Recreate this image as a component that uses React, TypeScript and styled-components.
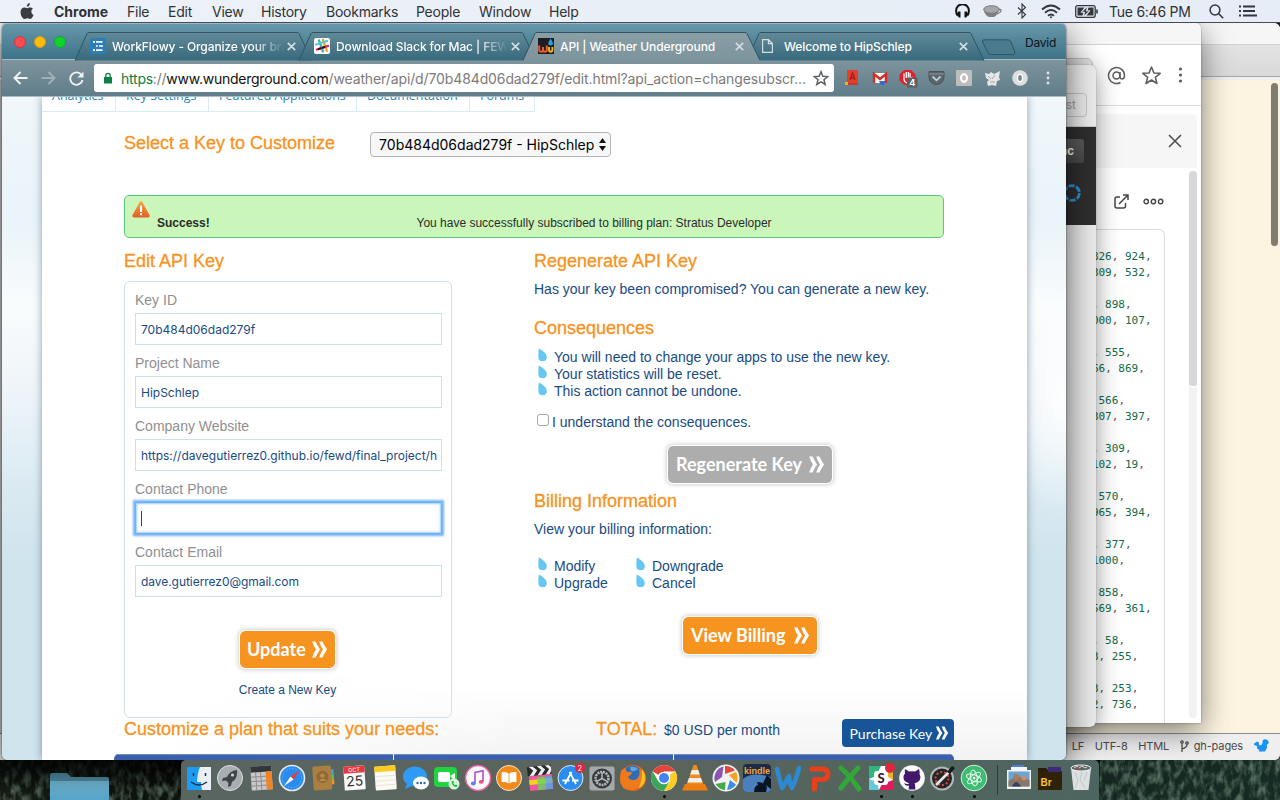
import React from 'react';
import styled, { createGlobalStyle, css } from 'styled-components';

const ui = `Inter, "Liberation Sans", sans-serif`;
const helv = `"Liberation Sans", Arial, sans-serif`;

const Global = createGlobalStyle`
  * { box-sizing: border-box; }
  body { margin: 0; overflow: hidden; background: #111a14; }
  svg { display: block; flex: none; }
`;

const Desktop = styled.main`
  position: relative;
  width: 1280px;
  height: 800px;
  overflow: hidden;
  font-family: ${ui};
  background: #111a14;
`;

/* ---------- menu bar ---------- */

const MenuBar = styled.header`
  position: relative;
  z-index: 5;
  display: flex;
  justify-content: space-between;
  align-items: center;
  height: 23px;
  padding: 0 15px 0 20px;
  background: linear-gradient(90deg, #edf2f8, #e6edf6);
  border-bottom: 1px solid #434c57;
  font-size: 14px;
  color: #2f3236;
  letter-spacing: -0.25px;
`;

const MenuList = styled.nav`
  display: grid;
  grid-template-columns: 34px 73px 41px 44px 49px 65px 90px 63px 70px auto;
  align-items: center;
  white-space: nowrap;
`;

const AppName = styled.span`
  font-weight: 700;
  letter-spacing: 0;
`;

const StatusList = styled.div`
  display: grid;
  grid-template-columns: 30px 30px 30px 28px 44px 92px 30px 34px;
  align-items: center;
  justify-items: center;
  white-space: nowrap;
`;

const Clock = styled.span`
  justify-self: start;
`;

/* ---------- windows ---------- */

const Window = styled.section`
  position: absolute;
  overflow: hidden;
  display: flex;
  flex-direction: column;
`;

const EditorWindow = styled(Window)`
  left: -60px;
  top: 23px;
  width: 1340px;
  height: 737px;
  border-radius: 6px;
  background: #fcf4e0;
`;

const TitleStrip = styled.div`
  flex: none;
  height: 22px;
  background: #f6f6f6;
  border-bottom: 1px solid #d2d2d2;
`;

const EditorTabs = styled.div`
  height: 35px;
  background: linear-gradient(#e3e3e3, #d9d9d9 31px, #a8a8a8 31px, #a8a8a8 32px, #eeeeee 32px);
`;

const EditorBody = styled.div`
  flex: 1;
  display: flex;
  justify-content: flex-end;
  padding: 3px 2px 0 0;
  background: linear-gradient(90deg, #d2d2d4 64px, #fcf4e0 64px);
`;

const EditorThumb = styled.div`
  width: 7px;
  height: 163px;
  border-radius: 4px;
  background: #807c70;
`;

const EditorStatus = styled.footer`
  display: flex;
  align-items: center;
  justify-content: flex-end;
  gap: 10.5px;
  height: 27px;
  padding: 0 11.5px 2px 0;
  border-top: 1px solid #8c8c8c;
  background: #efefef;
  color: #4c4c4c;
  font-size: 11px;
  letter-spacing: -0.12px;
  white-space: nowrap;
`;

const Branch = styled.span`
  display: flex;
  align-items: center;
  gap: 5px;
`;

const ChatWindow = styled(Window)`
  left: 700px;
  top: 23px;
  width: 501px;
  height: 700px;
  border-radius: 6px 6px 0 0;
  background: #fff;
  box-shadow: 0 8px 30px rgba(0, 0, 0, 0.5), 0 0 2px rgba(0, 0, 0, 0.4);
`;

const ChatHeader = styled.div`
  flex: none;
  display: flex;
  justify-content: flex-end;
  align-items: center;
  height: 61px;
  padding-right: 9.5px;
  border-bottom: 1px solid #dcdcdc;
`;

const IconCell = styled.span<{ $w: number }>`
  display: flex;
  justify-content: center;
  align-items: center;
  width: ${(p) => p.$w}px;
`;

const ChatSubHeader = styled.div`
  flex: none;
  display: flex;
  align-items: center;
  justify-content: flex-end;
  height: 54px;
  margin: 8px 4px 0 0;
  padding-right: 15px;
  border-radius: 0 5px 0 0;
  background: #f6f6f6;
`;

const ChatColumns = styled.div`
  flex: 1;
  display: flex;
  justify-content: flex-end;
  min-height: 0;
  padding-right: 4px;
`;

const FileColumn = styled.div`
  width: 260px;
  margin-right: 24px;
  display: flex;
  flex-direction: column;
`;

const FileActions = styled.div`
  display: flex;
  justify-content: flex-end;
  align-items: center;
  gap: 14px;
  height: 61px;
  padding: 5px 1px 0 0;
`;

const CodeBox = styled.pre`
  flex: 1;
  margin: 0;
  padding: 19px 12.5px 0 0;
  border: 1px solid #dcdcdc;
  border-bottom: 0;
  border-radius: 0 6px 0 0;
  text-align: right;
  font: 11px/16px "DejaVu Sans Mono", monospace;
  color: #116b47;
`;

const Comma = styled.span`
  color: #555;
`;

const ChatScroll = styled.div`
  width: 8px;
  margin: 3px 0 5px;
  border-radius: 4px;
  background: #f2f2f2;
`;

const ChatThumb = styled.div`
  height: 217px;
  border-radius: 4px;
  background: #d8d8dc;
  border-bottom: 2px solid #fff;
`;

const HiddenWindow = styled(Window)`
  left: 700px;
  top: 58px;
  width: 393px;
  height: 40px;
  border-radius: 6px;
  background: #ededed;
  border: 1px solid #c9c9c9;
`;

const PageWindow = styled(Window)`
  left: 700px;
  top: 65px;
  width: 396px;
  height: 662px;
  border-radius: 6px;
  background: #ececec;
  box-shadow: 0 4px 24px rgba(0, 0, 0, 0.4), 0 0 1px rgba(0, 0, 0, 0.6);
`;

const PageWindowBar = styled.div`
  flex: none;
  display: flex;
  justify-content: flex-end;
  height: 62px;
  padding: 28px 9px 0 0;
  background: #eee;
  border-bottom: 1px solid #ccc;
`;

const GhostButton = styled.span`
  width: 80px;
  height: 24px;
  padding-right: 10px;
  border: 1px solid #c6c6c6;
  border-radius: 4px;
  text-align: right;
  font-size: 12px;
  line-height: 22px;
  color: #a2a2a2;
`;

const DarkPanel = styled.div`
  flex: none;
  display: flex;
  flex-direction: column;
  align-items: flex-end;
  gap: 21px;
  height: 98px;
  padding: 12px 12px 0 0;
  background: #2f2f2f;
`;

const DarkButton = styled.span`
  width: 80px;
  height: 24px;
  padding-right: 10px;
  border-radius: 3px;
  background: linear-gradient(#5c5c5c, #484848);
  text-align: right;
  font: 700 12px/24px ${helv};
  color: #fff;
`;

const RingWrap = styled.span`
  padding-right: 3px;
`;

/* ---------- browser ---------- */

const Browser = styled(Window)`
  left: 2px;
  top: 23px;
  width: 1064px;
  height: 737px;
  border-radius: 6px;
  background: #fff;
  box-shadow: 0 10px 34px rgba(0, 0, 0, 0.65), 0 0 2px rgba(0, 0, 0, 0.7);
`;

const TabStrip = styled.div`
  flex: none;
  display: flex;
  height: 37px;
  padding-top: 8px;
  border-top: 1px solid #9ab9c5;
  border-bottom: 1px solid #a3bcc5;
  background: linear-gradient(#6897aa, #3d7389);
`;

const Lights = styled.div`
  display: flex;
  gap: 8px;
  width: 73px;
  padding: 4px 0 0 12px;
`;

const Light = styled.i<{ $c: string; $b: string }>`
  width: 12px;
  height: 12px;
  border-radius: 50%;
  background: ${(p) => p.$c};
  border: 1px solid ${(p) => p.$b};
`;

const TabBox = styled.div<{ $active?: boolean }>`
  position: relative;
  z-index: ${(p) => (p.$active ? 2 : 1)};
  width: 238px;
  margin-right: -14px;
  height: ${(p) => (p.$active ? 29 : 28)}px;
`;

const TabShape = styled.svg`
  position: absolute;
  left: 0;
  top: 0;
`;

const TabInner = styled.div`
  position: relative;
  display: flex;
  align-items: center;
  height: 28px;
  padding: 0 14px 0 15px;
`;

const TabTitle = styled.span<{ $fade?: boolean }>`
  width: 175px;
  margin-left: 6px;
  overflow: hidden;
  white-space: nowrap;
  font-size: 12px;
  font-weight: 500;
  letter-spacing: -0.1px;
  color: #fff;
  ${(p) =>
    p.$fade &&
    css`
      mask-image: linear-gradient(90deg, #000 140px, transparent 172px);
    `}
`;

const NewTab = styled.svg`
  margin: 7px 0 0 10px;
`;

const Profile = styled.span`
  margin-left: 8px;
  padding-top: 3px;
  font-size: 12px;
  letter-spacing: -0.2px;
  line-height: 16px;
  color: #0c1216;
`;

const Toolbar = styled.div`
  flex: none;
  display: flex;
  align-items: center;
  height: 37px;
  padding: 0 4px;
  background: linear-gradient(#7d949d, #607d89);
  border-bottom: 1px solid #a9bcc3;
`;

const Omnibox = styled.div`
  display: flex;
  align-items: center;
  width: 740px;
  height: 28px;
  margin: 0 4px 0 4px;
  padding: 0 5px 0 9px;
  border-radius: 3px;
  background: #fff;
  font-size: 14px;
  color: #7b7b7b;
  white-space: nowrap;
`;

const Origin = styled.span`
  margin-left: 8px;
  letter-spacing: -0.24px;
`;

const Scheme = styled.span`
  color: #0d8043;
`;

const Host = styled.span`
  color: #111;
`;

const Path = styled.span`
  flex: 1;
  letter-spacing: -0.115px;
`;

/* ---------- web page ---------- */

const Viewport = styled.div`
  flex: 1;
  display: flex;
  min-height: 0;
  padding-left: 40px;
  overflow: hidden;
  background:
    radial-gradient(ellipse 60px 120px at 1060px 300px, rgba(255, 255, 255, 0.9), transparent),
    linear-gradient(#f1f7fb 0, #e9f3f9 120px, #f9fcfd 210px, #f4f8fb 250px, #edf4f9 300px, #dcebf3 380px, #d0e4ed 460px, #cfe4ed 100%);
`;

const Sheet = styled.div`
  width: 985px;
  padding-left: 82px;
  background: linear-gradient(90deg, #fff 12%, rgba(255, 255, 255, 0) 50%), linear-gradient(#fff 590px, #f2f2f2 665px);
  box-shadow: 0 0 8px rgba(20, 50, 70, 0.45);
  font-family: ${helv};
  font-size: 14px;
  color: #184b84;
`;

const SiteNav = styled.nav`
  display: flex;
  width: 493px;
  height: 15px;
  margin-left: -82px;
  border-bottom: 1px solid #d7ecf4;
`;

const NavItem = styled.a<{ $w: number }>`
  width: ${(p) => p.$w}px;
  padding-left: 10px;
  border-right: 1px solid #d7ecf4;
  font: 12.5px/18px "Open Sans", sans-serif;
  color: #2a84b5;
  white-space: nowrap;

  span {
    display: block;
    margin-top: -10px;
  }
`;

const Heading = styled.h2`
  margin: 0;
  font-size: 18px;
  font-weight: 400;
  line-height: 20px;
  color: #f7931e;
  -webkit-text-stroke: 0.3px #f7931e;
  white-space: nowrap;
`;

const KeyRow = styled.div`
  display: flex;
  gap: 35px;
  height: 25px;
  margin-top: 20px;

  ${Heading} {
    line-height: 22px;
  }
`;

const KeySelect = styled.div`
  display: flex;
  align-items: center;
  justify-content: space-between;
  width: 241px;
  height: 25px;
  padding: 0 4px 0 8px;
  border: 1px solid #b4b4b4;
  border-radius: 4px;
  background: #f7f7f7;
  font: 14px ${ui};
  color: #000;
  white-space: nowrap;
`;

const Alert = styled.div`
  display: flex;
  width: 820px;
  height: 43px;
  margin-top: 38px;
  padding: 5px 7px;
  border: 1px solid #5cc681;
  border-radius: 5px;
  background: #caf6ba;
  font-size: 12px;
  line-height: 16px;
  color: #2b2b2b;
`;

const AlertTitle = styled.strong`
  width: 259.5px;
  padding: 14px 0 0 7px;
`;

const AlertText = styled.span`
  padding: 14px 0 0 7px;
`;

const Columns = styled.div`
  display: grid;
  grid-template-columns: 328px 431px;
  column-gap: 82px;
  height: 480px;
  padding-top: 13px;
`;

const EditForm = styled.form`
  display: flex;
  flex-direction: column;
  align-items: center;
  height: 437px;
  margin-top: 10px;
  padding: 8px 11px 0 10px;
  border: 1px solid #cfe3ed;
  border-radius: 6px;
`;

const Field = styled.label`
  display: block;
  width: 100%;
  height: 63px;
  line-height: 20px;
  color: #8f8f8f;
`;

const Input = styled.span<{ $focus?: boolean; $ls?: number }>`
  display: flex;
  align-items: center;
  height: 32px;
  width: 307px;
  margin-top: 3px;
  padding: 1px 4px 0 5px;
  overflow: hidden;
  border: 1px solid #cbe2eb;
  background: #fff;
  font: 12px ${ui};
  letter-spacing: ${(p) => p.$ls ?? 0}px;
  color: #184b84;
  white-space: nowrap;
  ${(p) =>
    p.$focus &&
    css`
      border-color: #6db1f7;
      box-shadow: 0 0 2px 2px #73b4f8, inset 0 0 2px 1px #9fccf9;
    `}
`;

const Caret = styled.i`
  width: 1px;
  height: 15px;
  background: #184b84;
`;

const PushButton = styled.button<{ $grey?: boolean; $w: number; $inset?: number }>`
  display: flex;
  align-items: center;
  justify-content: space-between;
  width: ${(p) => p.$w}px;
  height: 39px;
  padding: 0 7px 1px ${(p) => p.$inset ?? 8.5}px;
  border: 1px solid #fff;
  border-radius: 6px;
  background: ${(p) => (p.$grey ? '#adadad' : '#f79420')};
  background-clip: padding-box;
  box-shadow: 0 0 4px 1px rgba(0, 0, 0, 0.18);
  font: 700 18px/20px Lato, sans-serif;
  color: #fff;
  white-space: nowrap;
`;

const NewKeyLink = styled.a`
  margin-top: 13px;
  font-size: 12px;
  line-height: 16px;
`;

const Side = styled.div`
  display: flex;
  flex-direction: column;
`;

const Para = styled.p`
  margin: 9px 0 0;
  line-height: 18px;
`;

const DropList = styled.ul`
  margin: 10px 0 0;
  padding: 0;
  list-style: none;
`;

const BillingLists = styled.div`
  display: grid;
  grid-template-columns: 98px 120px;
  margin: 9px 0 25px;
`;

const DropItem = styled.li`
  display: flex;
  gap: 7px;
  height: 17px;
  padding-left: 4px;
  line-height: 18px;
`;

const Consent = styled.label`
  display: flex;
  gap: 3px;
  margin: 14px 0;
  padding-left: 3px;
  line-height: 18px;
`;

const Box = styled.i`
  width: 12px;
  height: 12px;
  margin-top: 1px;
  border: 1px solid #a5a5a5;
  border-radius: 3px;
  background: #fff;
`;

const Spaced = styled.div<{ $top: number }>`
  margin-top: ${(p) => p.$top}px;
`;

const Centered = styled.div`
  display: flex;
  justify-content: center;
`;

const PlanRow = styled.div`
  display: grid;
  grid-template-columns: 472px 68px 178px 112px;
  height: 28px;
  margin-top: 1px;
`;

const Price = styled.span`
  line-height: 22px;
`;

const Purchase = styled.button`
  display: flex;
  align-items: center;
  justify-content: space-between;
  height: 28px;
  padding: 0 5px 0 7.500px;
  border: 0;
  border-radius: 4px;
  background: #175598;
  font: 14px Lato, sans-serif;
  color: #fff;
  white-space: nowrap;
`;

const PlanTable = styled.div`
  display: grid;
  grid-template-columns: 279px 279px 1fr;
  column-gap: 1px;
  width: 840px;
  height: 8px;
  margin: 7px 0 0 -10px;
  border-radius: 5px 5px 0 0;
  overflow: hidden;
  background: #fff;
`;

const PlanCell = styled.div`
  background: #3a60ae;
  border-top: 1px solid #6f8cc6;
`;

/* ---------- desktop bottom ---------- */

const Forest = styled.svg`
  position: absolute;
  left: 0;
  top: 740px;
`;

const Dock = styled.footer`
  position: absolute;
  left: 181px;
  top: 760px;
  display: flex;
  width: 918px;
  height: 40px;
  padding: 3px 0 0 2.5px;
  border-radius: 5px 5px 0 0;
  background: linear-gradient(90deg, #596561, #5a645c 50%, #4d6560);
`;

const DockCell = styled.div`
  display: flex;
  flex-direction: column;
  align-items: center;
  width: 31px;
`;

const RunDot = styled.i`
  width: 3px;
  height: 3px;
  margin-top: 2px;
  border-radius: 50%;
  background: #000;
`;

const DockDivider = styled.div`
  width: 1px;
  height: 30px;
  margin: 2px 6px 0 7px;
  background: #2e3a38;
`;

/* ---------- drawings ---------- */

const DoubleChevron = ({ s = 17 }: { s?: number }) => (
  <svg width={s} height={s} viewBox="0 0 17 17" fill="#fff">
    <path d="M1.200 .5h3.300Q6 4 9 8.500 6 13 4.500 16.500H1.200Q2.500 12 5 8.500 2.500 5 1.200 .5z" />
    <path d="M8.200 .5h3.300Q13 4 16 8.500 13 13 11.500 16.500H8.200Q9.500 12 12 8.500 9.500 5 8.200 .5z" />
  </svg>
);

const Drop = () => (
  <svg width="9" height="14" viewBox="0 0 9 14">
    <path d="M.9 .3C4 2.800 8.800 5 8.800 9.200A4.200 4 0 0 1 .4 9.200C.4 6.500 .2 3.300 .9 .3z" fill="#67c6f2" />
  </svg>
);

const TabClose = () => (
  <svg width="9" height="9" viewBox="0 0 9 9" stroke="#d3dde1" strokeWidth="1.7">
    <path d="M.8 .8l7.400 7.400M8.200 .8L.8 8.200" />
  </svg>
);

const favicons: Record<string, React.ReactNode> = {
  workflowy: (
    <svg width="16" height="16" viewBox="0 0 16 16">
      <rect width="16" height="16" rx="1.500" fill="#2b7fb8" />
      <path d="M3 3.800h2M6 3.800h6.500M6 8h1.800M9 8h4M3 12.200h2M6 12.200h6.500" stroke="#fff" strokeWidth="1.700" />
    </svg>
  ),
  slack: (
    <svg width="16" height="16" viewBox="0 0 16 16">
      <rect width="16" height="16" rx="2" fill="#fff" />
      <g strokeWidth="2.300" strokeLinecap="round">
        <path d="M5 2.500l4 11" stroke="#3eb890" />
        <path d="M9 1.800l3.800 11" stroke="#e9a820" />
        <path d="M2 6.500l11-3.500" stroke="#5cc4dd" />
        <path d="M3 11.500l11-3.500" stroke="#e01765" />
        <path d="M4.800 11l1.500-.5M9 9.500l1-.3" stroke="#301020" />
      </g>
    </svg>
  ),
  wu: (
    <svg width="16" height="16" viewBox="0 0 16 16">
      <rect width="16" height="16" fill="#1e1e20" />
      <path d="M1.200 7.500v4q0 2.300 1.900 2.300T5 11.500V9v2.500q0 2.300 1.900 2.300t1.900-2.300v-4" fill="none" stroke="#ee5b2c" strokeWidth="2" />
      <path d="M11 9v2.500q0 2.300 1.700 2.300t1.700-2.300V9" fill="none" stroke="#f8b31b" strokeWidth="1.900" />
      <path d="M12.500 .5q2.400 3.300 2.400 4.800a2.300 2.300 0 0 1-4.600 0Q10.300 3.800 12.500 .5z" fill="#1fa4e3" />
    </svg>
  ),
  doc: (
    <svg width="16" height="16" viewBox="0 0 16 16" fill="none" stroke="#d5dfe3" strokeWidth="1.200">
      <path d="M.6 1.600h5.800l4 4v8.800H.6zM6.400 1.600v4h4" />
    </svg>
  ),
};

const Tab = ({ icon, title, active, fade }: { icon: string; title: string; active?: boolean; fade?: boolean }) => (
  <TabBox $active={active}>
    <TabShape width="238" height="29" viewBox="0 0 238 29">
      <defs>
        <linearGradient id={'g' + icon} x1="0" y1="0" x2="0" y2="1">
          <stop offset="0" stopColor={active ? '#8a9ea6' : '#628a98'} />
          <stop offset="1" stopColor={active ? '#7d949d' : '#37697d'} />
        </linearGradient>
      </defs>
      <path d="M0 28.500L12 1.500q.5-1 2-1h208q1.500 0 2 1l13 27" fill={`url(#g${icon})`} stroke="#2f5563" strokeWidth="1" />
      {active && <path d="M.6 28.500h236.800" stroke="#7d949d" />}
    </TabShape>
    <TabInner>
      {favicons[icon]}
      <TabTitle $fade={fade}>{title}</TabTitle>
      <TabClose />
    </TabInner>
  </TabBox>
);

const Badge = ({ cx = 24, cy = 5, children }: { cx?: number; cy?: number; children?: React.ReactNode }) => (
  <>
    <circle cx={cx} cy={cy} r="5" fill="#e0263c" />
    {children}
  </>
);

const dockIcons: { art: React.ReactNode; run?: boolean }[] = [
  { run: true, art: <><rect x="3" y="4" width="24" height="23" rx="1" fill="#1d9df2" /><path d="M16 4h11v23H18q-1-5-1-8h-4q.5-9 3-15z" fill="#eaf0f5" /><path d="M7 19q8 6 16 0" fill="none" stroke="#15314b" strokeWidth="1.400" /><path d="M9.500 10v3M21.500 10v3" stroke="#15314b" strokeWidth="1.500" /></> },
  { art: <><circle cx="15" cy="15" r="12.500" fill="#a7adb0" stroke="#dde1e2" /><path d="M22 7c-5 .5-8 3-10 7l-4 1-1 3 4-.5 2.500 2.500-.5 4 3-1.200 1-4c4-2 5.500-6 5-11.800z" fill="#3f4448" /><circle cx="17.500" cy="12" r="1.600" fill="#cfd3d5" /></> },
  { art: <g transform="rotate(-4 15 15)"><rect x="5" y="3" width="21" height="24" rx="1" fill="#c9c9c9" /><rect x="5" y="3" width="21" height="6" fill="#34373a" /><path d="M10 9v18M15 9v18M5 13.500h21M5 18h21M5 22.500h21" stroke="#8c8c8c" /><rect x="20" y="9" width="6" height="18" fill="#f08322" /></g> },
  { art: <><circle cx="15" cy="15" r="12.500" fill="#2a8bee" stroke="#e5e9ec" strokeWidth="1.600" /><circle cx="15" cy="15" r="9.500" fill="none" stroke="#8cc4fa" strokeDasharray="1 2" /><path d="M23 7l-6.500 9.500-3-3z" fill="#f03a34" /><path d="M7 23l6.500-9.500 3 3z" fill="#fff" /></> },
  { art: <g transform="rotate(-4 15 15)"><rect x="22" y="7" width="4" height="5" fill="#4a9fe0" /><rect x="22" y="12" width="4" height="5" fill="#5bc152" /><rect x="22" y="17" width="4" height="5" fill="#f2952a" /><rect x="5" y="3" width="18.500" height="24" rx="1.500" fill="#a97f42" /><circle cx="14.500" cy="14" r="6" fill="#8f6a33" /><circle cx="14.500" cy="12.500" r="2.200" fill="#b58b4e" /><path d="M10.500 18q4-5 8 0" fill="#b58b4e" /></g> },
  { art: <g transform="rotate(-4 15 15)"><rect x="5" y="3" width="21" height="24" rx="1" fill="#fafafa" /><rect x="5" y="3" width="21" height="7" fill="#e23a3f" /><text x="15.500" y="8.800" fontSize="5.500" fill="#fff" textAnchor="middle" fontFamily="Inter">OCT</text><text x="15.500" y="23" fontSize="14" fill="#333" textAnchor="middle" fontFamily="Inter">25</text></g> },
  { art: <g transform="rotate(-4 15 15)"><rect x="5" y="3" width="21" height="24" rx="1" fill="#fbfaf3" /><rect x="5" y="3" width="21" height="5.500" fill="#fccb1d" /><path d="M5 13h21M5 17.500h21M5 22h21" stroke="#e9e6dc" /></g> },
  { art: <><ellipse cx="14" cy="13.500" rx="12" ry="10" fill="#2f9bf5" /><path d="M6 20l-2 6 7-3z" fill="#2f9bf5" /><ellipse cx="20" cy="20" rx="8" ry="6.500" fill="#fff" /><g fill="#2a6aa8"><circle cx="16.500" cy="20" r="1.200" /><circle cx="20" cy="20" r="1.200" /><circle cx="23.500" cy="20" r="1.200" /></g></> },
  { art: <><rect x="2" y="4" width="23" height="20" rx="4" fill="#1fd43f" /><rect x="6" y="9" width="12" height="10" rx="2" fill="#fff" /><path d="M18 13l5-3v8z" fill="#fff" /><circle cx="22" cy="21" r="5.500" fill="#d7f7dc" /><path d="M19.500 18.500q.5 5 5 5.500l1-1.500-1.800-1-1 .8-1.500-2 .8-.8-.8-1.800z" fill="#1eb83b" /></> },
  { art: <><circle cx="15" cy="15" r="12.500" fill="#fbfbfd" stroke="#ee5f9d" strokeWidth="1.500" /><path d="M12 20.500V9.500l8-1.800v11" fill="none" stroke="#b04fd8" strokeWidth="1.600" /><ellipse cx="10.200" cy="20.500" rx="2.400" ry="1.900" fill="#5a7ff0" /><ellipse cx="18.200" cy="18.800" rx="2.400" ry="1.900" fill="#ef4f7c" /></> },
  { art: <><circle cx="15" cy="15" r="12.500" fill="#f18a18" stroke="#f7e7d3" /><path d="M14.600 10.500q-3-2-7-1.200v10q4-.8 7 1.200zM15.400 10.500q3-2 7-1.200v10q-4-.8-7 1.200z" fill="#fff" /></> },
  { art: <g transform="rotate(-6 15 15)"><rect x="4" y="12" width="23" height="15" fill="#f0579c" /><rect x="4" y="16" width="23" height="5" fill="#f7d322" /><rect x="12" y="14" width="8" height="13" fill="#64d264" opacity=".8" /><rect x="20" y="14" width="7" height="13" fill="#4fa8f2" opacity=".8" /><path d="M3 3h24v9H3z" fill="#26282b" /><path d="M5 3l4 4h4L9 3zM13 3l4 4h4l-4-4zM21 3l4 4h2V5l-2-2zM9 7l-4 5h4l4-5zM17 7l-4 5h4l4-5zM25 7l-4 5h4l2-3V7z" fill="#eee" /></g> },
  { art: <><circle cx="14.500" cy="15" r="12.500" fill="#2b8df0" stroke="#dfe9f2" /><path d="M9 21l6.500-12M20 21L13.500 9M6.500 17.500h7M16 17.500h6.500" stroke="#fff" strokeWidth="1.800" fill="none" /><Badge cx={24}><text x="24" y="7.500" fontSize="7" fill="#fff" textAnchor="middle" fontFamily="Inter">2</text></Badge></> },
  { art: <><rect x="2.500" y="3.500" width="25" height="24" rx="2" fill="#a5a9ac" /><circle cx="15" cy="15.500" r="10" fill="#36393c" /><circle cx="15" cy="15.500" r="6.500" fill="none" stroke="#b4b8ba" strokeWidth="2.500" strokeDasharray="2 .8" /><path d="M15 15.500V9M15 15.500l5.600 3.200M15 15.500l-5.600 3.200" stroke="#b4b8ba" strokeWidth="1.500" /></> },
  { art: <><circle cx="15" cy="15" r="13" fill="#e8661c" /><circle cx="14.500" cy="12" r="9.500" fill="#2f6db8" /><path d="M12 4q5-1 8 2-3 3-7 2z" fill="#62a6dc" /><path d="M3 8q2-3 5-3-1 3 2 4 3-1 4 1-1 3-4 3.500 2 5 8 3 5-3 3-11 5 3 5 9-3 12-13 12.500T2 17z" fill="#ef7a1b" /><path d="M24 6q5 7 2.500 13-2 5-6 6 4-7 3.500-19z" fill="#fbc11f" /></> },
  { run: true, art: <><circle cx="15" cy="15" r="13" fill="#fff" /><path d="M15 15L3.700 8.500A13 13 0 0 1 26.300 8.500H15z" fill="#e2463b" /><path d="M15 15L26.300 8.500A13 13 0 0 1 15 28l5.500-9.500z" fill="#fbcd20" /><path d="M9.500 18.500L3.700 8.500A13 13 0 0 0 15 28l5-9z" fill="#3aa757" /><circle cx="15" cy="15" r="6.300" fill="#fff" /><circle cx="15" cy="15" r="5" fill="#4484f2" /></> },
  { art: <><path d="M13.500 2h3l7 20h-17z" fill="#f38a1a" /><path d="M11.800 7h6.400l1.600 4.500h-9.600zM9 15h12l1.600 4.500H7.400z" fill="#f1f1f1" /><path d="M5 21h20l3 6.500H2z" fill="#ee7d12" /></> },
  { art: <><circle cx="15" cy="15" r="13.500" fill="#f3f3f3" /><path d="M14 3a12 12 0 0 1 10 4.500L14 11z" fill="#e0483e" /><path d="M25 9a12 12 0 0 1 .5 11L18 12z" fill="#f2a323" /><path d="M25 21.500a12 12 0 0 1-9 5.500l3-10z" fill="#3d8ee0" /><path d="M14 27a12 12 0 0 1-9.500-6l10-2z" fill="#43a94b" /><path d="M4 19A12 12 0 0 1 12.500 3.500L11 14z" fill="#8c55b5" /></> },
  { art: <><rect x="1" y="1" width="28" height="28" rx="4" fill="#1b2c48" /><path d="M1 16q8-8 28-2v11q0 4-4 4H5q-4 0-4-4z" fill="#4a80bd" /><path d="M12 29q0-6 4-7l-1-3q8 0 10 5l-1 5zM21 20l4-8 4 4v10z" fill="#0b1422" /><text x="15" y="11" fontSize="9" fontWeight="700" fill="#f5a93b" textAnchor="middle" fontFamily="Liberation Sans">kindle</text></> },
  { art: <path d="M4 6q3 12 5 19 5-8 7-12 0 6 3 12Q24 14 26 5" fill="none" stroke="#2c8ad4" strokeWidth="4.500" strokeLinejoin="round" strokeLinecap="round" /> },
  { art: <path d="M8 6h10q6 0 6 5t-6 5.500h-7.500V26" fill="none" stroke="#e8401c" strokeWidth="5" strokeLinejoin="round" strokeLinecap="round" /> },
  { art: <path d="M6 5q9 8 18 21M23 5Q14 14 6 25" fill="none" stroke="#31a73a" strokeWidth="5" strokeLinecap="round" /> },
  { run: true, art: <><rect x="3" y="3" width="24" height="24" rx="2" fill="#fff" /><path d="M3 3h12l-5 10-7 3z" fill="#2eb67d" /><path d="M3 16l8 3 2 8H3z" fill="#67cadb" /><path d="M13 27l3-6 11-4v10z" fill="#e01b5a" /><path d="M20 3h7v14l-5-3z" fill="#ecb22e" /><rect x="8" y="8" width="14" height="14" rx="3" fill="#fff" /><text x="15" y="20" fontSize="13" fontWeight="900" fill="#3d1a3e" textAnchor="middle" fontFamily="Lato">S</text><Badge /></> },
  { run: true, art: <><circle cx="15" cy="15" r="12.800" fill="#fafafa" /><path d="M8 6l4 2.500q3-.7 6 0L22 6q1 3 .5 5 2 4-.5 7-2 2-4.500 2.200.8 1 .8 6.300h-6.600q0-2 .3-4-4 1-5-2.500 3 2 5.300.2Q6 19 6.500 13.500 6.700 12 8 10.500 7.500 8.500 8 6z" fill="#43186b" /></> },
  { art: <><circle cx="14" cy="15.500" r="12" fill="#b5b8ba" /><circle cx="14" cy="15.500" r="10" fill="#232527" /><circle cx="14" cy="15.500" r="6.500" fill="none" stroke="#d24d3a" strokeWidth="2" strokeDasharray="2 2" /><path d="M8 22L21 9" stroke="#e2e4e6" strokeWidth="2.600" /><path d="M19 9l5-6 3 2-5 6z" fill="#15181c" /></> },
  { run: true, art: <><circle cx="15" cy="15" r="12.800" fill="#3dbd72" stroke="#d5ecdc" /><g fill="none" stroke="#e9fbef" strokeWidth="1"><ellipse cx="15" cy="15" rx="8" ry="3.200" transform="rotate(20 15 15)" /><ellipse cx="15" cy="15" rx="8" ry="3.200" transform="rotate(80 15 15)" /><ellipse cx="15" cy="15" rx="8" ry="3.200" transform="rotate(140 15 15)" /></g><circle cx="15" cy="15" r="1.300" fill="#fff" /></> },
];

const trayIcons: React.ReactNode[] = [
  <><rect x="8" y="2" width="12" height="8" fill="#4b7fd8" /><path d="M7 4h16v5H7z" fill="#f2f4f8" /><rect x="3" y="7" width="24" height="19" fill="#f3f3f3" /><rect x="4.500" y="8.500" width="21" height="15" fill="#6aa5d4" /><path d="M4.500 18l8-5 13 4v6.500h-21z" fill="#8a7768" /><circle cx="12" cy="14" r="3" fill="#b0795b" /><path d="M8 23.500q4-9 9 0z" fill="#33425e" /><circle cx="20" cy="15" r="2.500" fill="#c98f6c" /></>,
  <><path d="M3 5h8l3 3h13v19H3z" fill="#2b1e06" /><path d="M13 4h13v5H13z" fill="#3a2b78" /><path d="M3 9h24v18H3z" fill="#302208" /><text x="11" y="22.500" fontSize="10" fontWeight="700" fill="#fdc52b" textAnchor="middle" fontFamily="Liberation Sans">Br</text></>,
  <><path d="M5 5h20l-2.500 22h-15z" fill="#dde0e1" /><path d="M9 9l3 8-3 8M16 8l-2 9 5 8M21 9l-3 9" stroke="#c3c7c9" fill="none" /><ellipse cx="15" cy="5" rx="10" ry="3" fill="#5c6668" stroke="#edf0f0" /><path d="M8 5l3-2 2 2 3-2 3 2 2-1" stroke="#e8d9d9" fill="none" /><circle cx="12" cy="5.200" r="1.200" fill="#d0402f" /></>,
];

const codeLines = [
  '826, 924,', '309, 532,', '', ', 898,   ', '000, 107,', '',
  ', 555,   ', '66, 869, ', '', ', 566,    ', '307, 397,', '',
  ', 309,   ', '102, 19, ', '', ', 570,    ', '965, 394,', '',
  ', 377,   ', '1000,    ', '', ', 858,    ', '569, 361,', '',
  ', 58,    ', '3, 255,  ', '', '3, 253,  ', '2, 736,  ',
];

const fields = [
  { label: 'Key ID', value: '70b484d06dad279f' },
  { label: 'Project Name', value: 'HipSchlep' },
  { label: 'Company Website', value: 'https://davegutierrez0.github.io/fewd/final_project/h' },
  { label: 'Contact Phone', value: '', focus: true },
  { label: 'Contact Email', value: 'dave.gutierrez0@gmail.com', ls: -0.05 },
];

const extensionIcons: React.ReactNode[] = [
  <svg key="a" width="16" height="18" viewBox="0 0 16 18"><path d="M3 1h11v13H3z" fill="#e2402f" /><path d="M6 11l2.500-7 2.500 7M7 9h3" stroke="#a51d14" fill="none" strokeWidth="1.300" /><path d="M2 14h12v2H2z" fill="#c9362a" /><path d="M1 13h3v3H1z" fill="#f2b21a" /></svg>,
  <svg key="b" width="16" height="16" viewBox="0 0 16 16"><rect x="1" y="3" width="14" height="10" fill="#f5f5f5" /><path d="M2 13V4l6 5 6-5v9" fill="none" stroke="#d62b22" strokeWidth="2.400" /><path d="M7 11h7l-2 4H9z" fill="#3a67c9" /></svg>,
  <svg key="c" width="20" height="20" viewBox="0 0 20 20"><path d="M6 2h7L17.500 6.500v6L13 17H6L1.500 12.500v-6z" fill="#e1202b" /><path d="M6 5.500v5q0 4 3.500 4.500 3 0 4-5l-1.500 1V5M8.300 4v6M10.300 4v6" stroke="#fff" strokeWidth="1.300" fill="none" /><rect x="9" y="9.500" width="10.500" height="10" rx="1" fill="#5b5f62" /><text x="14.200" y="18" fontSize="9" fontWeight="700" fill="#fff" textAnchor="middle" fontFamily="Inter">4</text></svg>,
  <svg key="d" width="17" height="16" viewBox="0 0 17 16"><path d="M1 1.500h15V7a7.500 7.500 0 0 1-15 0z" fill="#5c676b" stroke="#4a5357" /><path d="M1 4h15" stroke="#8a9498" /><path d="M4.500 6.500l4 3.800 4-3.800" fill="none" stroke="#b9d2d7" strokeWidth="1.800" /></svg>,
  <svg key="e" width="16" height="16" viewBox="0 0 16 16"><rect width="16" height="16" rx="1" fill="#bdbdbd" /><ellipse cx="8" cy="8" rx="3" ry="3.800" fill="none" stroke="#fff" strokeWidth="2.200" /></svg>,
  <svg key="f" width="17" height="17" viewBox="0 0 17 17"><path d="M1 3l4 1 2-2 3 2 6-3-1 6 1 3-3 1-1 5-4-1-4 1-1-4 2-2-3-2z" fill="#e4e6e7" /><path d="M4 6l3 3M11 5l-3 4M6 12h5" stroke="#9fa9ad" /></svg>,
  <svg key="g" width="16" height="16" viewBox="0 0 16 16"><circle cx="8" cy="8" r="7.800" fill="#dcdedf" /><ellipse cx="8" cy="8" rx="2.400" ry="3.600" fill="#6d8690" stroke="#fff" strokeWidth="1.200" /></svg>,
  <svg key="h" width="6" height="16" viewBox="0 0 6 16" fill="#dfe5e8"><circle cx="3" cy="3" r="1.400" /><circle cx="3" cy="8" r="1.400" /><circle cx="3" cy="13" r="1.400" /></svg>,
];

export default function App() {
  return (
    <Desktop>
      <Global />
      <Forest width="1280" height="60" viewBox="0 0 1280 60">
        <defs>
          <linearGradient id="ground" x1="0" x2="1" y1="0" y2="0">
            <stop offset="0" stopColor="#151d15" />
            <stop offset=".14" stopColor="#0c120d" />
            <stop offset=".86" stopColor="#14261f" />
            <stop offset="1" stopColor="#152b23" />
          </linearGradient>
          <filter id="trees" x="0" y="0" width="1" height="1">
            <feTurbulence type="fractalNoise" baseFrequency=".16 .09" numOctaves="3" seed="4" />
            <feColorMatrix values="0 0 0 0 .22  0 0 0 0 .34  0 0 0 0 .25  2.600 0 0 0 -1.050" />
          </filter>
          <linearGradient id="shade" x1="0" x2="0" y1="0" y2="1">
            <stop offset=".3" stopColor="#000" stopOpacity=".75" />
            <stop offset=".9" stopColor="#000" stopOpacity="0" />
          </linearGradient>
          <linearGradient id="folder" x1="0" x2="0" y1="0" y2="1">
            <stop offset="0" stopColor="#76bcd8" />
            <stop offset="1" stopColor="#57a9cf" />
          </linearGradient>
        </defs>
        <rect width="1280" height="60" fill="url(#ground)" />
        <rect width="1280" height="60" filter="url(#trees)" opacity=".6" />
        <rect width="1100" height="60" fill="url(#shade)" />
        <path d="M50 60V35q0-2 2-2h15l4 4h36q2 0 2 2v21z" fill="#528fa9" />
        <path d="M50 60V41h59v19z" fill="url(#folder)" />
      </Forest>

      <EditorWindow>
        <TitleStrip />
        <EditorTabs />
        <EditorBody>
          <EditorThumb />
        </EditorBody>
        <EditorStatus>
          <span>LF</span>
          <span>UTF-8</span>
          <span>HTML</span>
          <Branch>
            <svg width="9" height="13" viewBox="0 0 9 13" fill="none" stroke="#4c4c4c" strokeWidth="1.300">
              <circle cx="2" cy="2" r="1.200" /><circle cx="7" cy="3" r="1.200" /><path d="M2 3.200V12M7 4.500q0 3-5 4.500" />
            </svg>
            gh-pages
          </Branch>
          <svg width="15" height="14" viewBox="0 0 15 14" fill="#1b93f2">
            <path d="M0 4.500q2-1 3-2 2 0 2 2 0 2 1 2 2-.5 2.500-2.500Q8 .5 11 .3q3.500.4 3.700 3.200-.2 2-2 2.300 1 2-.2 4L11 12.500H4.500l1-1.800Q2.500 10.500 3 7L0 6z" />
          </svg>
        </EditorStatus>
      </EditorWindow>

      <ChatWindow>
        <TitleStrip />
        <ChatHeader>
          <IconCell $w={35}>
            <svg width="19" height="19" viewBox="0 0 19 19" fill="none" stroke="#5c5c60" strokeWidth="1.500">
              <circle cx="9.500" cy="9.500" r="3.500" /><path d="M13 6v5q.3 2 2 2 2.700-.5 2.500-4A8 8 0 1 0 13.500 16.500" />
            </svg>
          </IconCell>
          <IconCell $w={35}>
            <svg width="19" height="19" viewBox="0 0 19 19" fill="none" stroke="#5c5c60" strokeWidth="1.500" strokeLinejoin="round">
              <path d="M9.500 1l2.400 5.900 6.300.4-4.900 4 1.700 6.200-5.500-3.500L4 17.500l1.700-6.200-4.900-4 6.300-.4z" />
            </svg>
          </IconCell>
          <IconCell $w={23}>
            <svg width="5" height="17" viewBox="0 0 5 17" fill="#5c5c60"><circle cx="2.500" cy="2" r="1.600" /><circle cx="2.500" cy="8" r="1.600" /><circle cx="2.500" cy="14" r="1.600" /></svg>
          </IconCell>
        </ChatHeader>
        <ChatSubHeader>
          <svg width="14" height="14" viewBox="0 0 14 14" stroke="#4a4a4d" strokeWidth="1.500"><path d="M1 1l12 12M13 1L1 13" /></svg>
        </ChatSubHeader>
        <ChatColumns>
          <FileColumn>
            <FileActions>
              <svg width="15" height="15" viewBox="0 0 15 15" fill="none" stroke="#444448" strokeWidth="1.500">
                <path d="M6 3H3Q1 3 1 5v7q0 2 2 2h6.500q2 0 2-2V9M5 10l8.500-8.500M9 1h5v5" />
              </svg>
              <svg width="21" height="7" viewBox="0 0 21 7" fill="none" stroke="#444448" strokeWidth="1.400"><circle cx="3.200" cy="3.500" r="2.200" /><circle cx="10.400" cy="3.500" r="2.200" /><circle cx="17.600" cy="3.500" r="2.200" /></svg>
            </FileActions>
            <CodeBox>
              {codeLines.map((line, i) => (
                <React.Fragment key={i}>
                  {line.replace(/ /g, '\u00a0').split(/(,)/).map((part, j) => (part === ',' ? <Comma key={j}>,</Comma> : part))}
                  {'\n'}
                </React.Fragment>
              ))}
            </CodeBox>
          </FileColumn>
          <ChatScroll>
            <ChatThumb />
          </ChatScroll>
        </ChatColumns>
      </ChatWindow>

      <HiddenWindow />
      <PageWindow>
        <PageWindowBar>
          <GhostButton>st</GhostButton>
        </PageWindowBar>
        <DarkPanel>
          <DarkButton>nc</DarkButton>
          <RingWrap>
            <svg width="18" height="18" viewBox="0 0 18 18" fill="none" stroke="#2e8fd0" strokeWidth="2.800"><circle cx="9" cy="9" r="7.400" strokeDasharray="6.300 1.450" /></svg>
          </RingWrap>
        </DarkPanel>
      </PageWindow>

      <Browser>
        <TabStrip>
          <Lights>
            <Light $c="#fc4b50" $b="#d9343d" />
            <Light $c="#fdbb0a" $b="#d99b12" />
            <Light $c="#0fd32b" $b="#12a929" />
          </Lights>
          <Tab icon="workflowy" title="WorkFlowy - Organize your brain." fade />
          <Tab icon="slack" title="Download Slack for Mac | FEWD" fade />
          <Tab icon="wu" title="API | Weather Underground" active />
          <Tab icon="doc" title="Welcome to HipSchlep" />
          <NewTab width="36" height="17" viewBox="0 0 36 17">
            <path d="M3 .8h24q2 0 2.800 1.700l4 10.500q.8 2.500-1.500 2.500H10q-2 0-2.800-1.700L1.500 3Q.8.800 3 .8z" fill="#4a7a8d" stroke="#2f5563" />
          </NewTab>
          <Profile>David</Profile>
        </TabStrip>
        <Toolbar>
          <IconCell $w={28}>
            <svg width="15" height="14" viewBox="0 0 15 14" fill="none" stroke="#f0f3f5" strokeWidth="1.900"><path d="M14.500 7H1.500M7.500 1L1.500 7l6 6" /></svg>
          </IconCell>
          <IconCell $w={28}>
            <svg width="15" height="14" viewBox="0 0 15 14" fill="none" stroke="#a0b0b7" strokeWidth="1.900"><path d="M.5 7h13M7.500 1l6 6-6 6" /></svg>
          </IconCell>
          <IconCell $w={28}>
            <svg width="15" height="15" viewBox="0 0 15 15" fill="none" stroke="#f0f3f5" strokeWidth="1.900"><path d="M12.500 4A6.200 6.200 0 1 0 13.500 9" /><path d="M14.500 .5v6h-6z" fill="#f0f3f5" stroke="none" /></svg>
          </IconCell>
          <Omnibox>
            <svg width="10" height="13" viewBox="0 0 10 13"><rect x="1" y="5" width="8" height="6.500" fill="#0d8043" /><path d="M2.800 5.500V3.500a2.200 2.200 0 0 1 4.400 0v2" fill="none" stroke="#0d8043" strokeWidth="1.300" /></svg>
            <Origin><Scheme>https</Scheme>://<Host>www.wunderground.com</Host></Origin>
            <Path>/weather/api/d/70b484d06dad279f/edit.html?api_action=changesubscr...</Path>
            <svg width="16" height="16" viewBox="0 0 19 19" fill="none" stroke="#5f6366" strokeWidth="1.800"><path d="M9.500 2l2.200 5.400 5.800.4-4.500 3.700 1.500 5.700-5-3.200-5 3.200L6 11.500 1.500 7.800l5.800-.4z" /></svg>
          </Omnibox>
          {extensionIcons.map((icon, i) => (
            <IconCell $w={28} key={i}>{icon}</IconCell>
          ))}
        </Toolbar>

        <Viewport>
          <Sheet>
            <SiteNav>
              <NavItem $w={74}><span>Analytics</span></NavItem>
              <NavItem $w={93}><span>Key Settings</span></NavItem>
              <NavItem $w={148}><span>Featured Applications</span></NavItem>
              <NavItem $w={113}><span>Documentation</span></NavItem>
              <NavItem $w={65}><span>Forums</span></NavItem>
            </SiteNav>
            <KeyRow>
              <Heading>Select a Key to Customize</Heading>
              <KeySelect>
                70b484d06dad279f - HipSchlep
                <svg width="7" height="13" viewBox="0 0 7 13" fill="#111"><path d="M3.500 0L7 5H0zM3.500 13L0 8h7z" /></svg>
              </KeySelect>
            </KeyRow>
            <Alert>
              <svg width="18" height="17" viewBox="0 0 18 17">
                <defs><linearGradient id="warn" x1="0" y1="0" x2="0" y2="1"><stop offset="0" stopColor="#f7a63c" /><stop offset="1" stopColor="#e0602a" /></linearGradient></defs>
                <path d="M7.600 1.200q1.400-1.700 2.800 0L17.500 14q.9 2.200-1.500 2.400H2Q-.4 16.200.5 14z" fill="url(#warn)" />
                <path d="M8 4.500h2V11H8zM8 12.300h2v2H8z" fill="#fff" />
              </svg>
              <AlertTitle>Success!</AlertTitle>
              <AlertText>You have successfully subscribed to billing plan: Stratus Developer</AlertText>
            </Alert>
            <Columns>
              <div>
                <Heading>Edit API Key</Heading>
                <EditForm>
                  {fields.map((f) => (
                    <Field key={f.label}>
                      {f.label}
                      <Input $focus={f.focus} $ls={f.ls}>{f.focus ? <Caret /> : f.value}</Input>
                    </Field>
                  ))}
                  <Spaced $top={25}>
                    <PushButton type="button" $w={97} $inset={7}>Update <DoubleChevron /></PushButton>
                  </Spaced>
                  <NewKeyLink>Create a New Key</NewKeyLink>
                </EditForm>
              </div>
              <Side>
                <Heading>Regenerate API Key</Heading>
                <Para>Has your key been compromised? You can generate a new key.</Para>
                <Spaced $top={20}>
                  <Heading>Consequences</Heading>
                </Spaced>
                <DropList>
                  <DropItem><Drop /> You will need to change your apps to use the new key.</DropItem>
                  <DropItem><Drop /> Your statistics will be reset.</DropItem>
                  <DropItem><Drop /> This action cannot be undone.</DropItem>
                </DropList>
                <Consent><Box />I understand the consequences.</Consent>
                <Centered>
                  <PushButton type="button" $w={166} $grey>Regenerate Key <DoubleChevron /></PushButton>
                </Centered>
                <Spaced $top={7}>
                  <Heading>Billing Information</Heading>
                </Spaced>
                <Para>View your billing information:</Para>
                <BillingLists>
                  <DropList>
                    <DropItem><Drop /> Modify</DropItem>
                    <DropItem><Drop /> Upgrade</DropItem>
                  </DropList>
                  <DropList>
                    <DropItem><Drop /> Downgrade</DropItem>
                    <DropItem><Drop /> Cancel</DropItem>
                  </DropList>
                </BillingLists>
                <Centered>
                  <PushButton type="button" $w={136}>View Billing <DoubleChevron /></PushButton>
                </Centered>
              </Side>
            </Columns>
            <PlanRow>
              <Heading>Customize a plan that suits your needs:</Heading>
              <Heading>TOTAL:</Heading>
              <Price>$0 USD per month</Price>
              <Purchase type="button">Purchase Key <DoubleChevron s={14} /></Purchase>
            </PlanRow>
            <PlanTable>
              <PlanCell />
              <PlanCell />
              <PlanCell />
            </PlanTable>
          </Sheet>
        </Viewport>
      </Browser>

      <Dock>
        {dockIcons.map((d, i) => (
          <DockCell key={i}>
            <svg width="30" height="30" viewBox="0 0 30 30">{d.art}</svg>
            {d.run && <RunDot />}
          </DockCell>
        ))}
        <DockDivider />
        {trayIcons.map((art, i) => (
          <DockCell key={i}>
            <svg width="30" height="30" viewBox="0 0 30 30">{art}</svg>
          </DockCell>
        ))}
      </Dock>

      <MenuBar>
        <MenuList>
          <svg width="14" height="17" viewBox="0 0 14 17" fill="#3a3d41">
            <path d="M9.800 0q.2 1.600-.8 2.700T6.800 3.800q-.2-1.500.8-2.600T9.800 0zM12.900 5.700q-1.800 1.100-1.600 3.100.1 2.300 2.200 3.100-.5 1.500-1.500 2.800-.9 1.300-2 1.300-.7 0-1.400-.4-.8-.3-1.500-.3t-1.500.4q-.7.300-1.300.3-1.200-.1-2.200-1.700Q.6 12.300.5 9.500.5 7 1.700 5.700q1.200-1.200 2.700-1.200.7 0 1.500.3.800.4 1.200.4.300 0 1.200-.4.900-.4 1.800-.3 1.900.1 2.800 1.200z" />
          </svg>
          <AppName>Chrome</AppName>
          <span>File</span>
          <span>Edit</span>
          <span>View</span>
          <span>History</span>
          <span>Bookmarks</span>
          <span>People</span>
          <span>Window</span>
          <span>Help</span>
        </MenuList>
        <StatusList>
          <svg width="15" height="15" viewBox="0 0 15 15"><path d="M2.500 11.500Q.8 9 1.200 6.500A6.300 6.300 0 0 1 13.800 6.500q.4 2.500-1.300 5" fill="none" stroke="#111" strokeWidth="1.900" /><path d="M3 7.500h2.500v6H4Q2 12.500 2 10zM12 7.500H9.500v6H11q2-1 2-3.500z" fill="#111" /></svg>
          <svg width="19" height="13" viewBox="0 0 19 13"><path d="M1 4q0 6 5 8h5q4-2 5-8z" fill="#7d7f82" /><ellipse cx="8.500" cy="4.500" rx="7.800" ry="3.800" fill="#a4a6a8" stroke="#77797c" /><path d="M15.500 4.500q3-.5 2.500 1.500-1 2.500-4 3" fill="none" stroke="#77797c" strokeWidth="1.200" /></svg>
          <svg width="10" height="16" viewBox="0 0 10 16" fill="none" stroke="#33363a" strokeWidth="1.100"><path d="M1 4.500l7.500 7L5 15V1l3.500 3.500-7.500 7" /></svg>
          <svg width="20" height="15" viewBox="0 0 20 15" fill="none" stroke="#33363a" strokeWidth="1.900"><path d="M1 5.500q9-8 18 0M4 8.700q6-5.300 12 0M7 11.700q3-2.600 6 0" /><circle cx="10" cy="13.300" r="1" fill="#33363a" stroke="none" /></svg>
          <svg width="24" height="13" viewBox="0 0 24 13"><rect x=".7" y=".7" width="19.500" height="11.600" rx="2" fill="none" stroke="#33363a" strokeWidth="1.300" /><path d="M2.500 2.500h7L5.500 7.500h3l-1 3h-5zM18.500 10.500h-7L15.500 5.500h-3l1-3h5z" fill="#33363a" /><path d="M12.500 1.500L6.500 7h3.300L8.500 11.500 14.500 6h-3.300z" fill="#33363a" stroke="#e8eef6" strokeWidth=".7" /><path d="M22 4.500v4" stroke="#33363a" strokeWidth="1.600" /></svg>
          <Clock>Tue 6:46 PM</Clock>
          <svg width="15" height="15" viewBox="0 0 15 15" fill="none" stroke="#33363a" strokeWidth="1.500"><circle cx="6" cy="6" r="4.900" /><path d="M9.600 9.600l4.600 4.600" /></svg>
          <svg width="18" height="12" viewBox="0 0 18 12" stroke="#33363a" strokeWidth="1.900"><path d="M0 1.500h2M4 1.500h12M0 6h2M4 6h12M0 10.500h2M4 10.500h14" /></svg>
        </StatusList>
      </MenuBar>
    </Desktop>
  );
}
